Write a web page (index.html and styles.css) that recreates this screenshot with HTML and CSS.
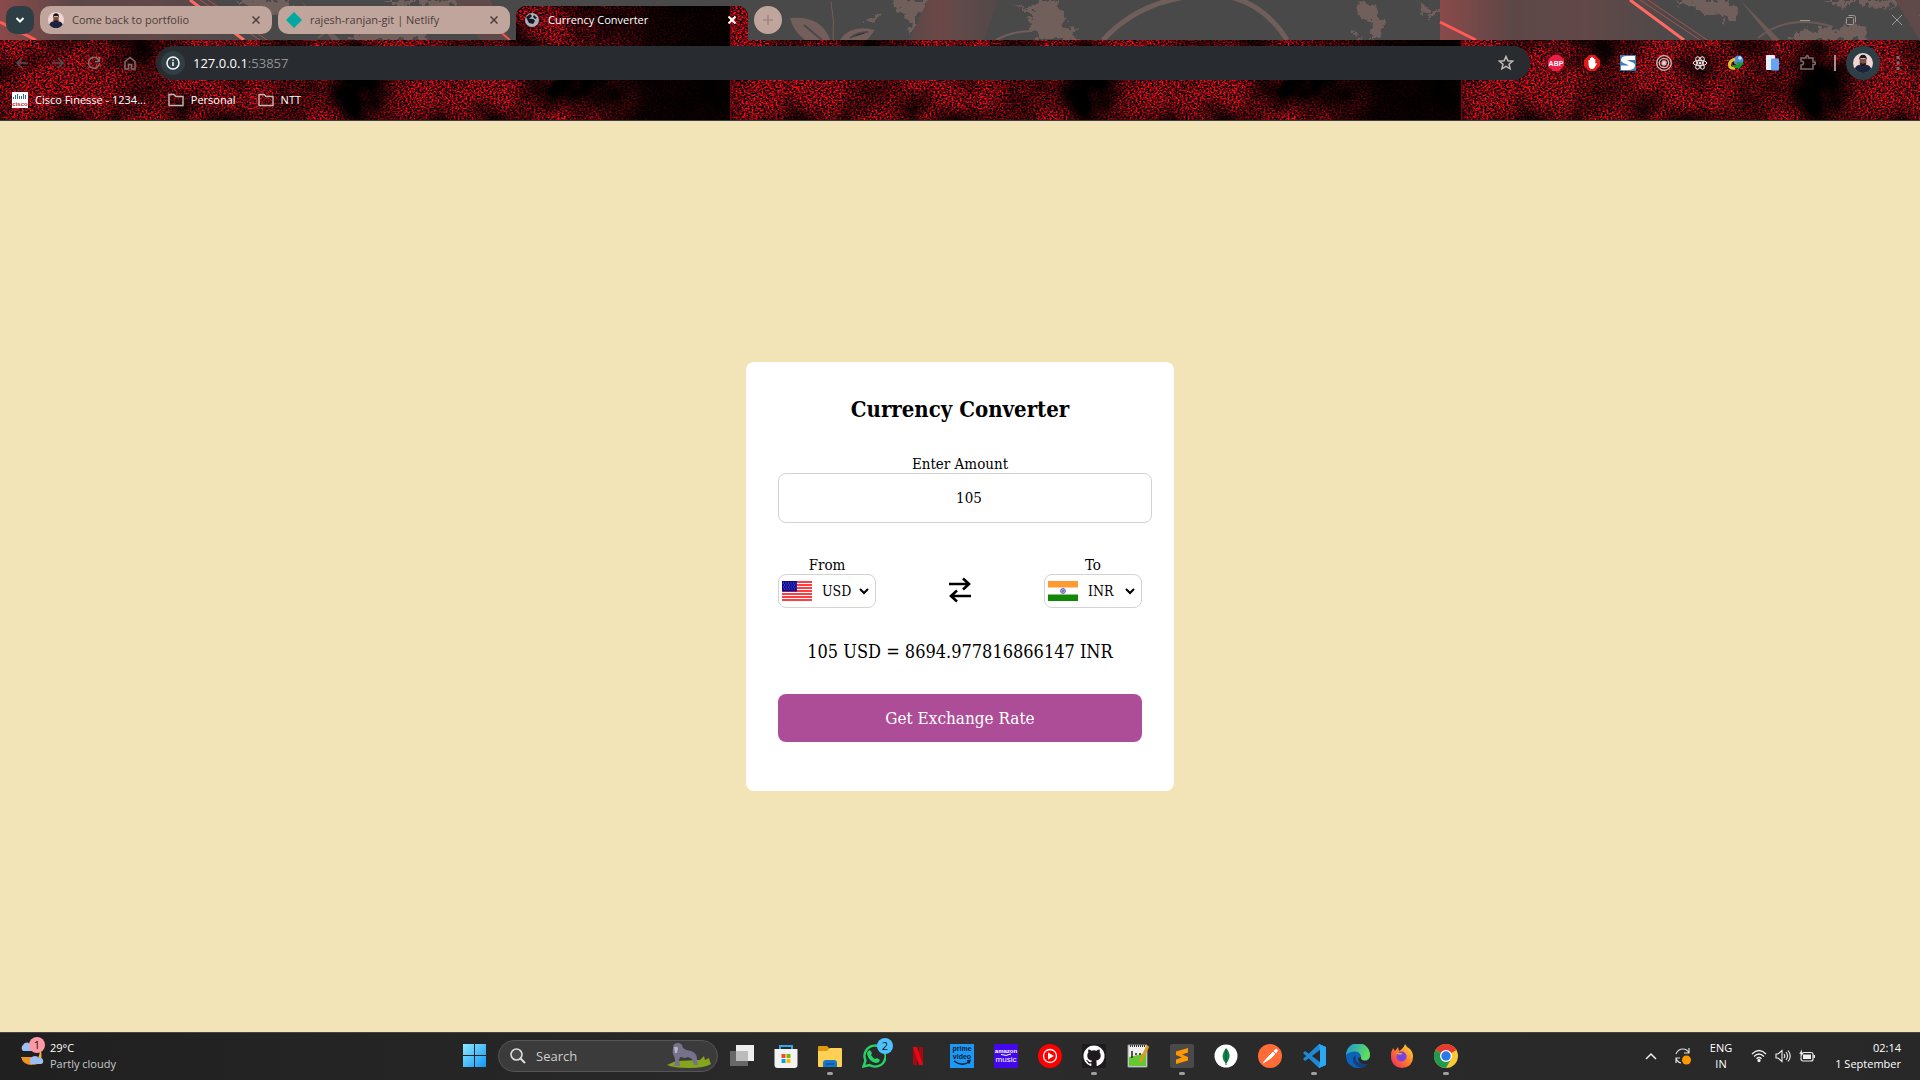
FILE: index.html
```html
<!DOCTYPE html>
<html lang="en">
<head>
<meta charset="utf-8">
<title>Currency Converter</title>
<link rel="stylesheet" href="styles.css">
</head>
<body>
<svg class="defs" aria-hidden="true">
  <defs>
    <filter id="grain" x="0" y="0" width="100%" height="100%" color-interpolation-filters="sRGB">
      <feTurbulence type="fractalNoise" baseFrequency="0.5 0.6" numOctaves="2" seed="4" result="f"/>
      <feColorMatrix in="f" values="2.3 0 0 0 -0.82  0 .3 0 0 -.13  0 0 .3 0 -.1  0 0 0 0 1" result="fine"/>
      <feTurbulence type="fractalNoise" baseFrequency="0.018" numOctaves="3" seed="11" result="c"/>
      <feColorMatrix in="c" values="2.4 0 0 0 -.55  2.4 0 0 0 -.55  2.4 0 0 0 -.55  0 0 0 0 1" result="clouds"/>
      <feComposite in="fine" in2="clouds" operator="arithmetic" k1="1.3"/>
    </filter>
    <filter id="rough" x="-20%" y="-20%" width="140%" height="140%">
      <feTurbulence type="fractalNoise" baseFrequency="0.14" numOctaves="3" seed="3"/>
      <feDisplacementMap in="SourceGraphic" scale="16" xChannelSelector="R" yChannelSelector="G"/>
    </filter>
    <linearGradient id="fade"><stop offset="0" stop-color="#000" stop-opacity="0"/><stop offset=".5" stop-color="#000" stop-opacity=".85"/><stop offset="1" stop-color="#000" stop-opacity=".9"/></linearGradient>
    <g id="tile"><rect width="730" height="120" filter="url(#grain)"/><rect x="570" width="160" height="120" fill="url(#fade)"/></g>
    <linearGradient id="wash"><stop offset="0" stop-color="#8a4a4a"/><stop offset=".3" stop-color="#5c4747"/><stop offset=".6" stop-color="#624848"/><stop offset="1" stop-color="#4b4949"/></linearGradient>
    <linearGradient id="beam"><stop offset="0" stop-color="#5a4848"/><stop offset=".35" stop-color="#6c4747"/><stop offset=".6" stop-color="#5f4a4a"/><stop offset="1" stop-color="#524848"/></linearGradient>
    <g id="art">
      <rect width="1440" height="40" fill="#494949"/>
      <path d="M0 0h215l30 40H0z" fill="url(#wash)"/>
      <path d="M0 22l36 18" stroke="#ff5a55" stroke-width="3"/>
      <path d="M190 0l54 40" stroke="#ff6a62" stroke-width="3"/>
      <path d="M200 0l60 40M208 0l62 42" stroke="#a85252"/>
      <g filter="url(#rough)" fill="#705e5a">
        <path d="M236 0h52l8 8 1 12-10 2-8-8-14 3-10-8z"/>
        <path d="M352 34l12-5 10 3 8-6 16 5 10-8 18 5-4 8 10 4h-80z"/>
        <path d="M385 0l12 7 18-4 20 5 20-3 10-5z"/>
        <path d="M865 22l6-6 10-3-5 6-7 4zM896 0h32l-4 8-6 6-2 12-9 8 2-14-5-8-10-4z"/>
        <path d="M1012 0l16 8 12-7 22 0-4 8 8 6-4 12 20 1-10 6 8 6h-40l-2-6-8-4-2-8 6-6-8-6z"/>
        <path d="M1356 8l8-6 10 2 2 10 10 6-4 10-2 10h-9l2-12-4-10-10-2zM1354 34l8-1-5 7z"/>
        <path d="M1418 0l5 8-3 6 4 2 4-10zM1430 8l6 4-4 6-4-3z"/>
      </g>
      <path d="M300 0l40 40h-8z" fill="#6b5a56"/>
      <path d="M318 38q30-24 72-12" stroke="#6b5a56" stroke-width="2" fill="none"/>
      <path d="M455 0h35l20 40h-30z" fill="#604949"/>
      <path d="M480 15l30 25" stroke="#f25550" stroke-width="2"/>
      <path d="M790 18q32-3 40 22h-25q-12-9-15-22zM840 40q10-16 35-10l-8 10z" fill="#745e5b"/>
      <path d="M804 25l18 15M850 38q8-6 18-6" stroke="#494949" stroke-width="2"/>
      <path d="M831 2q4 18 2 38" stroke="#745e5b" fill="none"/>
      <path d="M928 0h70l-14 40h-75z" fill="url(#beam)"/>
      <path d="M996 40q16-9 36-9" stroke="#705e5a" stroke-width="2" fill="none"/>
      <path d="M1103 40Q1135 5 1185-3M1230-3Q1265 5 1287 40" stroke="#705e5a" stroke-width="5" fill="none"/>
    </g>
    <g id="man">
      <circle cx="12" cy="12" r="12" fill="#f0d5d2"/>
      <path d="M2 19q2-5 7-5l3 2 3-2q5 0 7 5-4 5-10 5T2 19z" fill="#1c2340"/>
      <path d="M8 7h8v5q0 4-4 4t-4-4z" fill="#7a5145"/>
      <path d="M7.500 8q0-6 4.500-6t4.500 6l-2-2h-5zM8.500 12l3.500 1 3.500-1q0 4-3.500 4t-3.500-4z" fill="#1a1516"/>
    </g>
  </defs>
</svg>

<header class="browser">
  <svg class="theme" aria-hidden="true"><use href="#tile"/><use href="#tile" x="730"/><use href="#tile" x="1461"/><path d="M730.500 0v120M1461.500 40v80" stroke="#7a0010"/></svg>
  <div class="tabstrip">
    <svg class="theme" aria-hidden="true"><use href="#art"/><use href="#art" x="1440"/></svg>
    <button class="tab-search" aria-label="Search tabs"><svg width="10" height="8" viewBox="0 0 10 8"><path d="M1.500 2L5 5.500 8.500 2" fill="none" stroke="#fff" stroke-width="2"/></svg></button>
    <div class="tab">
      <svg width="16" height="16" viewBox="0 0 24 24"><use href="#man"/></svg>
      <span>Come back to portfolio</span>
      <button aria-label="Close tab"><svg width="8" height="8" viewBox="0 0 8 8"><path d="M.5.500l7 7M7.500.500l-7 7" stroke="currentColor" stroke-width="1.500"/></svg></button>
    </div>
    <div class="tab">
      <svg width="16" height="16" viewBox="0 0 16 16"><path d="M8 0l8 8-8 8-8-8z" fill="#00a8a3"/></svg>
      <span>rajesh-ranjan-git | Netlify</span>
      <button aria-label="Close tab"><svg width="8" height="8" viewBox="0 0 8 8"><path d="M.5.500l7 7M7.500.500l-7 7" stroke="currentColor" stroke-width="1.500"/></svg></button>
    </div>
    <div class="tab active">
      <svg class="theme" aria-hidden="true"><use href="#tile" x="-516"/><use href="#tile" x="214"/><path d="M214.500 0v40" stroke="#7a0010"/></svg>
      <svg width="16" height="16" viewBox="0 0 16 16"><circle cx="8" cy="8" r="7" fill="#a9b0bb"/><path d="M2 5q3-2 4-3l2 2-3 3q5-1 6 2l-2 3-4-1M10 3l3 3-2 1-2-2z" fill="#15181c"/></svg>
      <span>Currency Converter</span>
      <button aria-label="Close tab"><svg width="8" height="8" viewBox="0 0 8 8"><path d="M.5.500l7 7M7.500.500l-7 7" stroke="currentColor" stroke-width="2"/></svg></button>
    </div>
    <button class="new-tab" aria-label="New tab"><svg width="10" height="10" viewBox="0 0 10 10"><path d="M5 0v10M0 5h10" stroke="#9a8783" stroke-width="1.500"/></svg></button>
    <div class="window-controls">
      <button aria-label="Minimize"><svg width="10" height="10"><path d="M0 5.500h10" stroke="currentColor"/></svg></button>
      <button aria-label="Restore"><svg width="10" height="10" fill="none" stroke="currentColor"><rect x=".5" y="2.500" width="7" height="7" rx="1"/><path d="M2.500.500h5q2 0 2 2v5"/></svg></button>
      <button aria-label="Close"><svg width="10" height="10"><path d="M0 0l10 10M10 0L0 10" stroke="currentColor"/></svg></button>
    </div>
  </div>
  <div class="toolbar">
    <button aria-label="Back"><svg class="ico" viewBox="0 0 16 16"><path d="M14 8H3M8 3L3 8l5 5"/></svg></button>
    <button aria-label="Forward"><svg class="ico" viewBox="0 0 16 16"><path d="M2 8h11M8 3l5 5-5 5"/></svg></button>
    <button class="lit" aria-label="Reload"><svg class="ico" viewBox="0 0 16 16"><path d="M13.500 8a5.500 5.500 0 1 1-1.500-4l1.500 2M13.500 2v4.500H9"/></svg></button>
    <button class="lit" aria-label="Home"><svg class="ico" viewBox="0 0 16 16"><path d="M3 14V6.500l5-4 5 4V14H9.500V9.500h-3V14z"/></svg></button>
    <div class="omnibox">
      <button class="site-info" aria-label="Site information"><svg width="14" height="14" viewBox="0 0 14 14"><circle cx="7" cy="7" r="6" fill="none" stroke="#fff" stroke-width="1.500"/><path d="M7 6v4M7 3.500v1.500" stroke="#fff" stroke-width="1.500"/></svg></button>
      <a class="url" href="#">127.0.0.1<span>:53857</span></a>
      <button class="star" aria-label="Bookmark"><svg width="16" height="16" viewBox="0 0 16 16"><path d="M8 1.500l1.900 4.300 4.600.4-3.500 3 1.100 4.600L8 11.400l-4.100 2.400L5 9.200l-3.500-3 4.600-.4z" fill="none" stroke="#c5b8b3" stroke-width="1.500"/></svg></button>
    </div>
    <div class="extensions">
      <button aria-label="Adblock Plus"><svg width="16" height="16" viewBox="0 0 16 16"><path d="M5 0h6l5 5v6l-5 5H5l-5-5V5z" fill="#ed1e45"/><text x="8" y="10.500" class="abp">ABP</text></svg></button>
      <button aria-label="AdBlock"><svg width="16" height="16" viewBox="0 0 16 16"><path d="M5 0h6l5 5v6l-5 5H5l-5-5V5z" fill="#e01b1b"/><path d="M4.500 9V5H6V3h1.300V2h1.400v1H10v1h1.300v5l.7-1 1 .5-2 3.500q-1 2-3 2-3.500 0-3.500-5z" fill="#fff"/></svg></button>
      <button aria-label="S extension"><svg width="16" height="16" viewBox="0 0 16 16"><path d="M0 0h16v16H0z" fill="#3c7fb1"/><path d="M15 1H7Q1 1 1 5q0 2.500 5 4l3 1.500H1V15h8q6-.500 6-4.500 0-3-5-4L7 5h8z" fill="#fff"/></svg></button>
      <button aria-label="Target"><svg width="16" height="16" viewBox="0 0 16 16" fill="none" stroke="#c9bebb" stroke-width="1.300"><circle cx="8" cy="8" r="7.300"/><circle cx="8" cy="8" r="4.700"/><circle cx="8" cy="8" r="2" fill="#ddd"/></svg></button>
      <button aria-label="React"><svg width="16" height="16" viewBox="0 0 16 16" fill="none" stroke="#f0e8e6"><ellipse cx="8" cy="8" rx="6.800" ry="2.600"/><ellipse cx="8" cy="8" rx="6.800" ry="2.600" transform="rotate(60 8 8)"/><ellipse cx="8" cy="8" rx="6.800" ry="2.600" transform="rotate(120 8 8)"/><circle cx="8" cy="8" r="1" fill="#fff"/></svg></button>
      <button aria-label="Download manager"><svg width="16" height="16" viewBox="0 0 16 16"><circle cx="10.500" cy="5.500" r="5" fill="#4f8fd8"/><circle cx="12" cy="3" r="1.800" fill="#cfe4f7"/><path d="M7 4Q1 6 1.500 10T7 13" fill="none" stroke="#d9c52c" stroke-width="3"/><path d="M4 9q1 2 5 1V7l7 1-6 7v-2q-5 1-6-4z" fill="#1d9a26"/></svg></button>
      <button aria-label="Devices"><svg width="16" height="16" viewBox="0 0 16 16"><rect x="2" y="0" width="9" height="15" rx="1" fill="#e6effa"/><rect x="7" y="3.500" width="8" height="12" rx="1" fill="#64a4f4"/></svg></button>
      <button class="lit" aria-label="Extensions"><svg class="ico" viewBox="0 0 16 16"><path d="M1 3h5V2q0-1.300 1.200-1.300T8.500 2v1H13v4h1q1.500 0 1.500 1.200T14 9.500h-1V14H1v-4q2.500 0 2.500-2T1 6z"/></svg></button>
    </div>
    <i class="divider"></i>
    <button class="profile" aria-label="Profile"><svg width="20" height="20" viewBox="0 0 24 24"><use href="#man"/></svg></button>
    <button class="menu lit" aria-label="Menu"><svg width="4" height="16" viewBox="0 0 4 16" fill="currentColor"><path d="M.5 1h3v3h-3zM.5 6.500h3v3h-3zM.5 12h3v3h-3z"/></svg></button>
  </div>
  <nav class="bookmarks">
    <a href="#"><svg width="16" height="16" viewBox="0 0 16 16"><path d="M0 0h16v16H0z" fill="#fff"/><path d="M1.500 5v2M3.500 3v4M5.500 2v5M7.500 4v3M9.500 4v3M11.500 2v5M13.500 3v4" stroke="#2d6a8c"/><text x="8" y="14" class="cisco">cisco</text></svg>Cisco Finesse - 1234...</a>
    <a href="#"><svg width="16" height="16" viewBox="0 0 16 16"><path d="M1 2.500h5l2 2h7v9H1z" fill="none" stroke="#c5b8b3" stroke-width="1.400"/></svg>Personal</a>
    <a href="#"><svg width="16" height="16" viewBox="0 0 16 16"><path d="M1 2.500h5l2 2h7v9H1z" fill="none" stroke="#c5b8b3" stroke-width="1.400"/></svg>NTT</a>
  </nav>
</header>

<main class="page">
  <form class="card">
    <h1>Currency Converter</h1>
    <label for="amount">Enter Amount</label>
    <input id="amount" type="text" inputmode="numeric" value="105">
    <div class="pair">
      <div class="side">
        <label for="from">From</label>
        <div class="picker">
          <svg width="30" height="20" viewBox="0 0 30 20"><path d="M0 0h30v20H0z" fill="#fff"/><path d="M0 1h30M0 4h30M0 7h30M0 10h30M0 13h30M0 16h30M0 19h30" stroke="#f00" stroke-width="1.700"/><path d="M0 0h15v10.500H0z" fill="#0b0b96"/><path d="M1 2h14M2 4h13M1 6h14M2 8h13" stroke="#6c6cc4" stroke-dasharray="1 1.500"/></svg>
          <select id="from"><option>USD</option><option>INR</option></select>
        </div>
      </div>
      <svg class="swap" width="24" height="26" viewBox="0 0 24 26"><path d="M1 7h20M15 1.500L21 7l-6 5.500M23 19H3M9 13.500L3 19l6 5.500" fill="none" stroke="#000" stroke-width="2.600"/></svg>
      <div class="side">
        <label for="to">To</label>
        <div class="picker">
          <svg width="30" height="20" viewBox="0 0 30 20"><path d="M0 0h30v6.500H0z" fill="#ff9933"/><path d="M0 13.500h30V20H0z" fill="#128807"/><circle cx="15" cy="10" r="2.400" fill="#b9b9e0" stroke="#5a5ab5"/><circle cx="15" cy="10" r=".8" fill="#22228c"/></svg>
          <select id="to"><option>INR</option><option>USD</option></select>
        </div>
      </div>
    </div>
    <p>105 USD = 8694.977816866147 INR</p>
    <button type="button">Get Exchange Rate</button>
  </form>
</main>

<footer class="taskbar">
  <button class="weather">
    <span class="weather-icon">
      <svg width="26" height="26" viewBox="0 0 26 26"><path d="M3 16h20V9q-3 11-9 15Q5 24 3 16z" fill="#f0941f"/><path d="M14 24q8-4 8-16 4 8-2 15z" fill="#f7b733"/><path d="M5 10a4 4 0 0 1 0-6 5 5 0 0 1 9 1v5zM13 23a4 4 0 0 1 0-6 5 5 0 0 1 8 0 3 3 0 0 1 2 6z" fill="#9cc0f5"/></svg>
      <b class="badge pink">1</b>
    </span>
    <span class="two"><span>29°C</span><span class="dim">Partly cloudy</span></span>
  </button>
  <div class="apps">
    <button aria-label="Start"><svg width="23" height="23" viewBox="0 0 23 23"><linearGradient id="w" x2="1" y2="1"><stop stop-color="#8be9ff"/><stop offset="1" stop-color="#1297f5"/></linearGradient><path d="M0 0h11v11H0zM12 0h11v11H12zM0 12h11v11H0zM12 12h11v11H12z" fill="url(#w)"/></svg></button>
    <label class="search">
      <svg width="16" height="16" viewBox="0 0 16 16"><circle cx="6.500" cy="6.500" r="5.500" fill="#4a4a4a" stroke="#ddd" stroke-width="1.600"/><path d="M10.500 10.500L15 15" stroke="#ddd" stroke-width="2"/></svg>
      <input type="text" placeholder="Search" aria-label="Search">
      <svg width="44" height="28" viewBox="0 0 44 28"><path d="M0 23l9-4 24-1 4-4 1 4 4-2 1 4 1 2q-6 4-22 4T0 23z" fill="#86a51b"/><path d="M6 6q0-5 5-5 4 0 5 5 4 3 8 3 6 2 6 8l1 6h-4l-2-6-4-2-3 1-5-1-1 3 1 6H7q2-5 0-10-2-3-1-8z" fill="#77728c"/><path d="M7 5q3-1 4 1l-1 5H8z" fill="#b9b5c9"/></svg>
    </label>
    <button aria-label="Task view"><svg width="24" height="24" viewBox="0 0 24 24"><path d="M6 1h18v16H6z" fill="#eee"/><path d="M0 7h18v15H0z" fill="#777" opacity=".8"/><path d="M6 7h12v10H6z" fill="#bbb"/></svg></button>
    <button aria-label="Store"><svg width="24" height="24" viewBox="0 0 24 24"><path d="M6 6V2h12v4" fill="none" stroke="#32a8ee" stroke-width="2"/><path d="M.500 5h23v16q0 3-3 3h-17q-3 0-3-3z" fill="#f3f3f3"/><path d="M7.500 10h4v4h-4z" fill="#f04f1c"/><path d="M12.500 10h4v4h-4z" fill="#7db700"/><path d="M7.500 15h4v4h-4z" fill="#00a2ee"/><path d="M12.500 15h4v4h-4z" fill="#fdb900"/></svg></button>
    <button class="running" aria-label="File Explorer"><svg width="24" height="24" viewBox="0 0 24 24"><path d="M0 3q0-1 1-1h8l3 3-3 4H0z" fill="#dc9a12"/><path d="M0 7h9l3-3h11q1 0 1 1v17q0 1-1 1H1q-1 0-1-1z" fill="#ffd056"/><path d="M5 23v-4q0-3 3-3h8q3 0 3 3v4z" fill="#1577c8"/><path d="M8 20h8" stroke="#0c5598" stroke-width="1.500"/></svg></button>
    <button aria-label="WhatsApp"><svg width="24" height="24" viewBox="0 0 24 24"><path d="M1.500 22.500l2-6a10.500 10.500 0 1 1 4 4.500z" fill="none" stroke="#25d366" stroke-width="2.400"/><path d="M8 6l2 3-1 2q2 3 4 4l2-1 3 2q-1 3-4 3-7-1-9-9 0-3 3-4z" fill="#25d366"/></svg><b class="badge blue">2</b></button>
    <button aria-label="Netflix"><svg width="24" height="24" viewBox="0 0 24 24"><path d="M7 3h4v18H7zM13 3h4v18h-4z" fill="#a80811"/><path d="M7 3h4l6 18h-4z" fill="#e50914"/></svg></button>
    <button aria-label="Prime Video"><svg width="24" height="24" viewBox="0 0 24 24"><path d="M0 0h24v24H0z" fill="#1c98f7"/><text x="12" y="7" class="prime">prime</text><text x="12" y="15" class="prime">video</text><path d="M4 17q8 6 15 1M17 17l3-.5-1 3" fill="none" stroke="#0c1c2c" stroke-width="1.400"/></svg></button>
    <button aria-label="Amazon Music"><svg width="24" height="24" viewBox="0 0 24 24"><path d="M0 0h24v24H0z" fill="#4109ec"/><text x="12" y="9" class="music">amazon</text><text x="12" y="18" class="music big">music</text><path d="M7 10.500q5 2 10-.5" fill="none" stroke="#fff"/></svg></button>
    <button aria-label="YouTube Music"><svg width="24" height="24" viewBox="0 0 24 24"><circle cx="12" cy="12" r="12" fill="#f00"/><circle cx="12" cy="12" r="6.500" fill="none" stroke="#fff" stroke-width="1.300"/><path d="M10 8.500l6 3.500-6 3.500z" fill="#fff"/></svg></button>
    <button class="running" aria-label="GitHub"><svg width="24" height="24" viewBox="0 0 24 24"><path d="M0 0h24v24H0z" fill="#1e1a1d"/><path d="M12 1.500a10.500 10.500 0 0 0-3.300 20.500c.5.100.7-.2.700-.5v-2c-3 .6-3.600-1.300-3.600-1.300-.5-1.200-1.200-1.500-1.200-1.500-1-.7.100-.7.100-.7 1 .1 1.600 1.100 1.600 1.100 1 1.600 2.500 1.200 3.100.9.100-.7.400-1.200.7-1.400-2.400-.3-4.800-1.200-4.800-5.300 0-1.200.4-2.100 1.100-2.800-.1-.3-.5-1.400.1-2.900 0 0 .9-.3 2.900 1.100a10 10 0 0 1 5.200 0c2-1.400 2.900-1.100 2.900-1.100.6 1.500.2 2.600.1 2.900.7.700 1.100 1.600 1.100 2.800 0 4.100-2.500 5-4.900 5.300.4.300.8 1 .8 2v2.900c0 .3.200.6.700.5A10.500 10.500 0 0 0 12 1.500z" fill="#fff"/></svg></button>
    <button aria-label="Notepad++"><svg width="24" height="24" viewBox="0 0 24 24"><path d="M2 1h19v22H2z" fill="#eee"/><path d="M3 13l17-4v13H3z" fill="#64c832"/><path d="M2 1h19v22H2z" fill="none" stroke="#999"/><path d="M4 2h15" stroke="#333" stroke-width="2" stroke-dasharray="1 1"/><path d="M6 7v7M9 10h2M13 10h2" stroke="#222" stroke-width="1.500"/><path d="M22 2L14 18" stroke="#d99b20" stroke-width="3"/></svg></button>
    <button class="running" aria-label="Sublime Text"><svg width="24" height="24" viewBox="0 0 24 24"><rect width="24" height="24" rx="2" fill="#4a4a4a"/><path d="M6 7.500L18 4v4.500L12 10.500l6 2.500v3.500L6 20v-4.500l6-2-6-2.500z" fill="#ff9800"/></svg></button>
    <button aria-label="MongoDB"><svg width="24" height="24" viewBox="0 0 24 24"><circle cx="12" cy="12" r="11.500" fill="#fff"/><path d="M12 4q4 4 3.500 9-1 4-3 6h-1q-3-3-3-7 .500-4 3.500-8z" fill="#11804a"/><path d="M12 5v16" stroke="#0b5b36"/></svg></button>
    <button aria-label="Postman"><svg width="24" height="24" viewBox="0 0 24 24"><circle cx="12" cy="12" r="12" fill="#ff6c37"/><path d="M5 19l7-8 3-3 2 2-4 4zM16 7l2-2 1.500 1L18 9z" fill="#fff" stroke="#fff"/></svg></button>
    <button class="running" aria-label="Visual Studio Code"><svg width="24" height="24" viewBox="0 0 24 24"><path d="M17 0l7 3v18l-7 3L1 9l2-2 15 11V6L3 17l-2-2z" fill="#1e8ad6"/><path d="M17 0l7 3v18l-7 3 1-6V6z" fill="#2aa9f2"/></svg></button>
    <button aria-label="Edge"><svg width="24" height="24" viewBox="0 0 24 24"><linearGradient id="e" x2="1" y2=".4"><stop stop-color="#1d8fe0"/><stop offset="1" stop-color="#5fe05a"/></linearGradient><circle cx="12" cy="12" r="12" fill="#0c64b8"/><path d="M0 11a12 12 0 0 1 24 0q0 5-6 5.500-4 0-3-3 0-5-5-6Q3 7 0 11z" fill="url(#e)"/><path d="M10 11q-2 7 5 8 4 0 7-2l1 2q-3 4-8 5-9-3-8-9 0-3 3-4z" fill="#15407c"/><path d="M15 13q-1 4 6 4l3-3v5l-3 1q-9 0-9-6z" fill="#282828"/></svg></button>
    <button aria-label="Firefox"><svg width="24" height="24" viewBox="0 0 24 24"><linearGradient id="ff" x1="1" x2="0" y2="1"><stop stop-color="#ffe63c"/><stop offset=".5" stop-color="#ff7a2a"/><stop offset="1" stop-color="#e8206c"/></linearGradient><path d="M15 0q2 4 5 5 3 3 3 8 0 10-11 11Q1 23 1 12q0-5 2-8l2 3 3-4 1 4q5-3 6-7z" fill="url(#ff)"/><circle cx="11.500" cy="12.500" r="5" fill="#7542e5"/><path d="M5 9q5-1 8 1-4 2-8-1z" fill="#ff9a2a"/></svg></button>
    <button class="running" aria-label="Chrome"><svg width="24" height="24" viewBox="0 0 24 24"><circle cx="12" cy="12" r="12" fill="#fcc934"/><path d="M12 12L1.600 6a12 12 0 0 1 20.800 0z" fill="#e33b2e"/><path d="M12 12L1.600 6A12 12 0 0 0 12 24l5-9z" fill="#229a4b"/><circle cx="12" cy="12" r="6" fill="#fff"/><circle cx="12" cy="12" r="4.700" fill="#2979e8"/></svg></button>
  </div>
  <div class="tray">
    <button aria-label="Hidden icons"><svg width="12" height="8" viewBox="0 0 12 8"><path d="M1 7l5-5 5 5" fill="none" stroke="#eee" stroke-width="1.500"/></svg></button>
    <button aria-label="Update"><svg width="18" height="18" viewBox="0 0 18 18"><path d="M2 7q2-5 7-5 4 0 6 4M15 1v5h-5M7 16q-4-1-5-5M6 11H2v5" fill="none" stroke="#ddd" stroke-width="1.200"/><circle cx="12.500" cy="13" r="4.500" fill="#ff9800"/></svg></button>
    <button class="lang"><span>ENG</span><span>IN</span></button>
    <button class="status" aria-label="Network, volume and battery">
      <svg width="16" height="14" viewBox="0 0 16 14" fill="none" stroke="#eee" stroke-width="1.300"><path d="M1 5q7-7 14 0M3 7.500q5-5 10 0M5.500 9.700q2.500-2.500 5 0"/><circle cx="8" cy="11.500" r="1" fill="#fff"/></svg>
      <svg width="16" height="14" viewBox="0 0 16 14" fill="none" stroke="#eee" stroke-width="1.100"><path d="M1 5h2l4-3.500v11L3 9H1zM9 5q1.500 2 0 4M11 3q3 4 0 8M13 1.500q4.500 5.500 0 11"/></svg>
      <svg width="16" height="14" viewBox="0 0 16 14"><rect x="2" y="3.500" width="12" height="8.500" rx="2" fill="none" stroke="#eee" stroke-width="1.200"/><path d="M4 5.500h8v4.500H4zM14.500 6h1.500v3h-1.500z" fill="#eee"/><path d="M3 0L0 5h2L1 9l4-5H3z" fill="#fff" stroke="#2b2b2b" stroke-width=".4"/></svg>
    </button>
    <button class="clock"><span>02:14</span><span>1 September</span></button>
  </div>
</footer>
</body>
</html>
```
FILE: styles.css
```css
* { box-sizing: border-box; }

body {
  margin: 0;
  min-height: 100vh;
  display: flex;
  flex-direction: column;
  font-family: "Open Sans", "Noto Sans", sans-serif;
  font-size: 11px;
  line-height: 16px;
  color: #fff;
}

button {
  display: flex;
  align-items: center;
  justify-content: center;
  padding: 0;
  border: 0;
  background: none;
  font: inherit;
  color: inherit;
}

a { color: inherit; text-decoration: none; }
svg { display: block; flex: none; }
.defs { position: absolute; width: 0; height: 0; }

/* Browser frame */
.browser {
  position: relative;
  background: #000;
  border-bottom: 1px solid #3c4043;
}
.theme { position: absolute; inset: 0; width: 100%; height: 100%; }
.browser > :not(.theme), .tabstrip > :not(.theme) { position: relative; }

.tabstrip {
  display: flex;
  gap: 6px;
  height: 40px;
  padding: 6px 0 0 6px;
  background: #494949;
}
.tab-search, .new-tab { width: 28px; height: 28px; border-radius: 10px; background: #2d3e44; }
.new-tab { border-radius: 50%; background: #bfa59b; }
.tab {
  display: flex;
  align-items: center;
  gap: 8px;
  width: 232px;
  height: 28px;
  padding: 0 12px 0 8px;
  border-radius: 10px;
  background: #bfa59b;
  color: #4b3d3b;
}
.tab span { flex: 1; }
.tab.active {
  height: 34px;
  padding-bottom: 6px;
  border-radius: 10px 10px 0 0;
  background: #000;
  color: #fff;
  overflow: hidden;
}
.tab.active > :not(.theme) { position: relative; }
.window-controls { display: flex; margin-left: auto; height: 28px; color: #a09898; }
.window-controls button { width: 46px; }

.toolbar {
  display: flex;
  align-items: center;
  height: 46px;
  padding: 0 16px 0 4px;
  color: #5a4b4c;
}
.toolbar > button, .extensions button { width: 36px; height: 34px; }
.ico { width: 16px; height: 16px; fill: none; stroke: currentColor; stroke-width: 1.5; }
.toolbar .lit { color: #7e6d6b; }
.omnibox {
  flex: 1;
  display: flex;
  align-items: center;
  gap: 8px;
  height: 34px;
  margin-left: 8px;
  padding: 0 16px 0 5px;
  border-radius: 17px;
  background: #282c30;
}
.site-info { width: 24px; height: 24px; border-radius: 50%; background: #2f3f45; }
.url { flex: 1; font-size: 13px; color: #fff; }
.url span { color: #929292; }
.extensions { display: flex; margin-left: 8px; }
.divider { width: 2px; height: 16px; margin: 0 10px 0 8px; background: #a98f89; }
.toolbar > .profile { width: 34px; border-radius: 50%; background: #2d3e44; }
.toolbar > .menu { width: 12px; margin-left: 12px; }
.abp { font: bold 7px "Liberation Sans", sans-serif; fill: #fff; text-anchor: middle; }
.cisco { font: bold 6px "Liberation Sans", sans-serif; fill: #b01c2e; text-anchor: middle; }

.bookmarks { display: flex; gap: 22px; height: 34px; padding: 6px 12px 0; }
.bookmarks a { display: flex; gap: 7px; height: 16px; }

/* Converter */
.page {
  flex: 1;
  display: flex;
  align-items: center;
  justify-content: center;
  background: #f3e4b8;
  color: #000;
  font-family: "DejaVu Serif Condensed", "DejaVu Serif", serif;
  font-size: 15px;
}
.card {
  display: flex;
  flex-direction: column;
  width: 428px;
  padding: 32px 32px 49px;
  border-radius: 8px;
  background: #fff;
  text-align: center;
}
.card h1 { margin: 0 0 31px; font-size: 22px; line-height: 30px; }
.card label { line-height: 18px; }
.card > input {
  width: 374px;
  height: 50px;
  padding: 0 0 0 8px;
  border: 1px solid #d3d3d3;
  border-radius: 8px;
  font: inherit;
  text-align: center;
}
.pair { display: flex; justify-content: space-between; align-items: flex-end; margin-top: 33px; }
.side { display: flex; flex-direction: column; width: 98px; }
.picker {
  display: flex;
  align-items: center;
  justify-content: space-between;
  height: 34px;
  padding: 0 3px;
  border: 1px solid #d3d3d3;
  border-radius: 8px;
}
.picker select {
  width: 54px;
  padding: 0;
  border: 0;
  background: #fff;
  font: inherit;
  font-size: 14px;
  outline: 0;
}
.swap { margin-bottom: 5px; }
.card p { margin: 31px 0 29px; font-size: 18px; line-height: 26px; }
.card > button {
  height: 48px;
  border-radius: 8px;
  background: #ae4d97;
  color: #fff;
  font-size: 17px;
}

/* Taskbar */
.taskbar {
  display: grid;
  grid-template-columns: 1fr auto 1fr;
  height: 48px;
  padding-bottom: 2px;
  border-top: 1px solid #454540;
  background: linear-gradient(90deg, #202020, #2b2b2b 50%, #282828);
}
.weather { justify-self: start; gap: 6px; padding-left: 18px; text-align: left; }
.weather-icon { position: relative; margin-top: -4px; }
.two, .lang, .clock { display: flex; flex-direction: column; justify-content: center; }
.dim { color: #c8c8c8; }
.badge {
  position: absolute;
  top: -4px;
  right: -1px;
  width: 16px;
  height: 16px;
  border-radius: 50%;
  font-weight: normal;
  text-align: center;
  color: #111;
}
.pink { background: #ff9aa5; }
.blue { top: 5px; right: 3px; background: #4cc2ff; }
.apps { display: flex; align-items: center; }
.apps button { position: relative; width: 44px; height: 45px; }
.running::after {
  content: "";
  position: absolute;
  bottom: 3px;
  left: 19px;
  width: 6px;
  height: 3px;
  border-radius: 2px;
  background: #a0a0a0;
}
.search {
  display: flex;
  align-items: center;
  gap: 10px;
  width: 220px;
  height: 32px;
  margin: 0 2px;
  padding: 0 6px 0 11px;
  border: 1px solid #555;
  border-radius: 16px;
  background: #3b3b3b;
}
.search input {
  flex: 1;
  min-width: 0;
  padding: 0;
  border: 0;
  background: none;
  font: inherit;
  font-size: 13px;
}
.search input::placeholder { color: #cfcfcf; opacity: 1; }
.prime, .music { font: bold 7px/1 "Liberation Sans", sans-serif; fill: #0c1c2c; text-anchor: middle; }
.music { font-size: 6px; fill: #fff; }
.big { font-size: 8px; font-weight: normal; }
.tray { display: flex; justify-self: end; padding-right: 19px; }
.tray button { width: 32px; }
.tray .lang { width: 44px; }
.tray .status { gap: 8px; width: 80px; }
.tray .clock { width: auto; min-width: 78px; align-items: flex-end; }
```
